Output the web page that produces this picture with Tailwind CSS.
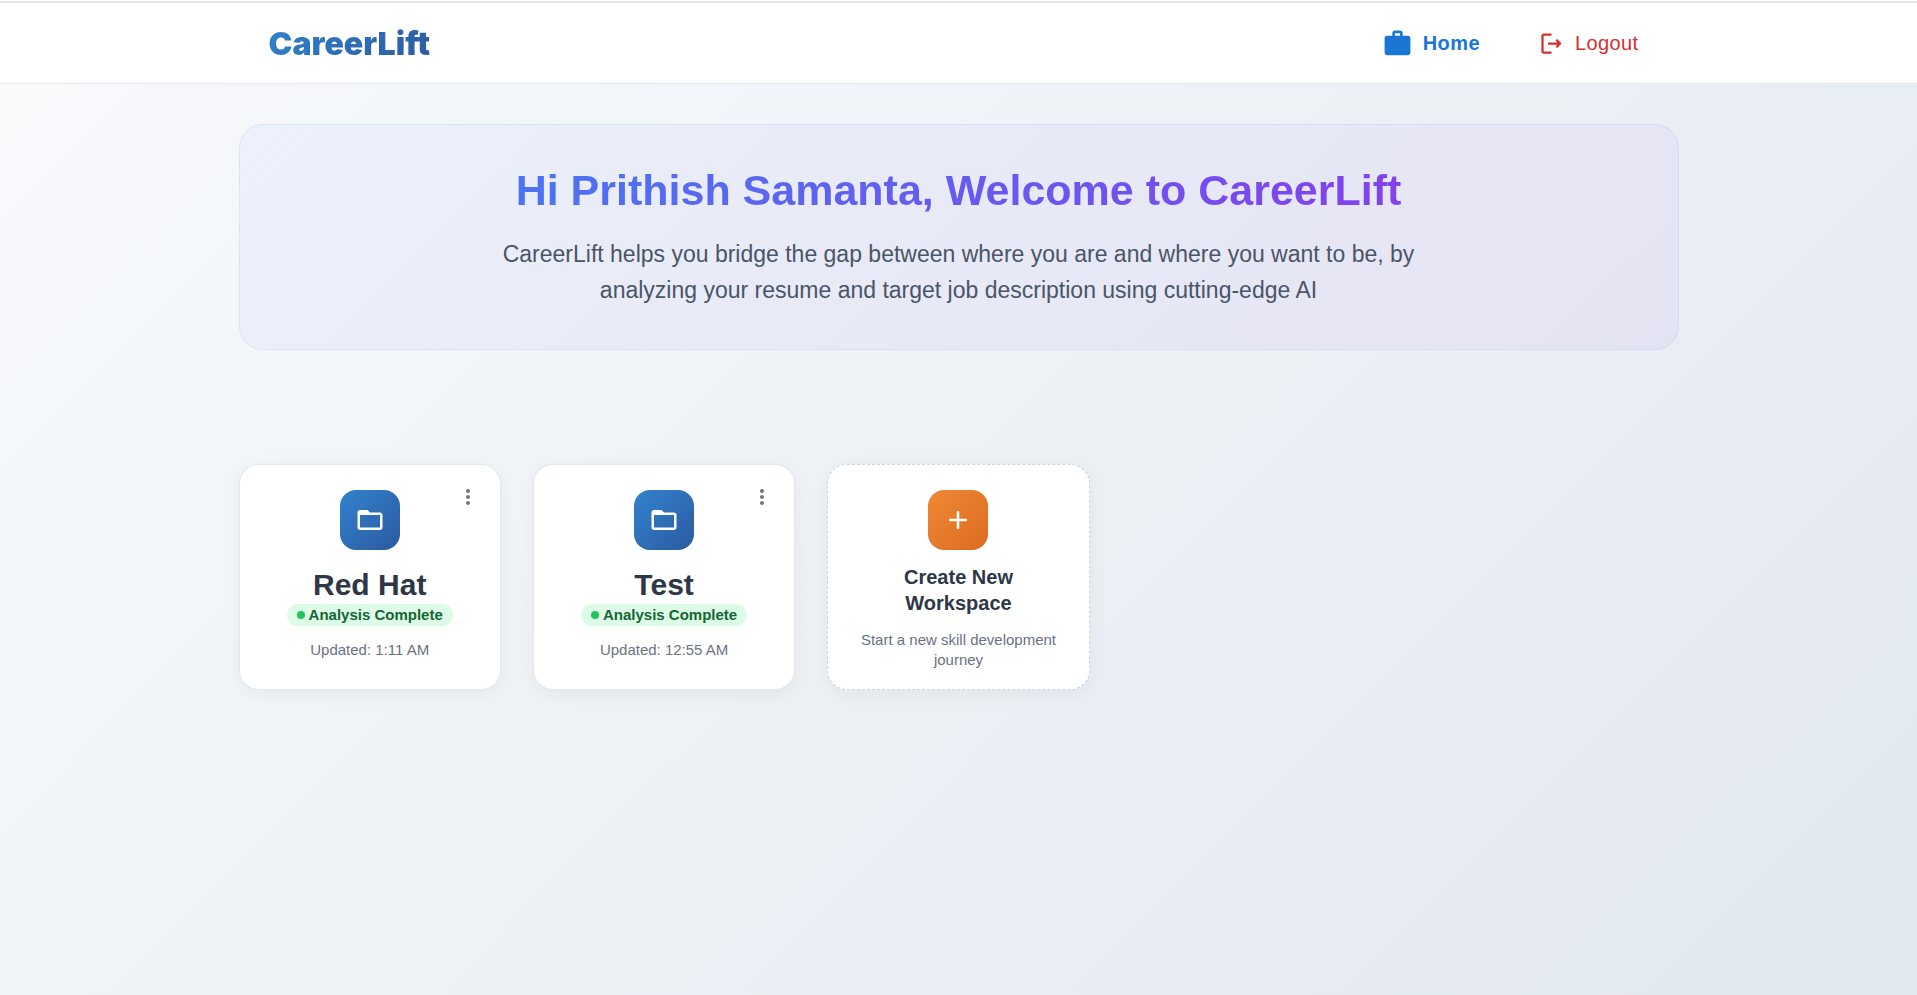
<!DOCTYPE html>
<html lang="en">
<head>
    <meta charset="UTF-8">
    <meta name="viewport" content="width=device-width, initial-scale=1.0">
    <title>CareerLift</title>
    <script src="https://cdn.jsdelivr.net/npm/@tailwindcss/browser@4"></script>
</head>
<body class="min-h-screen flex flex-col font-['Liberation_Sans',Arial,sans-serif] bg-[linear-gradient(135deg,#f8fafc_0%,#e2e8f0_100%)]">
    <!-- Top bar -->
    <header class="bg-white border-b border-[#e2e8f0]">
        <div class="mt-px h-[2px] bg-[#e4e4ea]"></div>
        <div class="max-w-[1440px] h-20 mx-auto px-[30px] flex justify-between items-center">
            <a href="#" class="pt-[2px] font-['Inter',sans-serif] font-black text-[32px] leading-10 bg-[linear-gradient(135deg,#3182ce_0%,#2c5aa0_100%)] bg-clip-text text-transparent">CareerLift</a>
            <nav class="flex items-center gap-[58px] pr-[10px] text-[20px] leading-7 tracking-[0.4px]">
                <a href="#" class="flex items-center gap-[10px] font-bold text-[#1976d2]">
                    <svg class="w-[31px] h-[31px]" viewBox="0 0 24 24" fill="currentColor"><path d="M20 6h-4V4c0-1.110-.89-2-2-2h-4c-1.110 0-2 .89-2 2v2H4c-1.110 0-2 .89-2 2v11c0 1.110.89 2 2 2h16c1.110 0 2-.89 2-2V8c0-1.110-.89-2-2-2m-6 0h-4V4h4z"/></svg>
                    Home
                </a>
                <a href="#" class="flex items-center gap-[10px] text-[#d32f2f]">
                    <svg class="w-[27px] h-[27px]" viewBox="0 0 24 24" fill="currentColor"><path d="m17 8-1.410 1.410L17.170 11H9v2h8.170l-1.580 1.580L17 16l4-4zM5 5h7V3H5c-1.100 0-2 .9-2 2v14c0 1.100.9 2 2 2h7v-2H5z"/></svg>
                    Logout
                </a>
            </nav>
        </div>
    </header>

    <main class="w-full max-w-[1440px] mx-auto pt-10">
        <!-- Welcome -->
        <section class="rounded-3xl border border-[#3b82f6]/10 bg-[linear-gradient(135deg,rgba(70,120,246,0.05)_0%,rgba(147,51,234,0.05)_100%)] px-8 pt-[39px] pb-[41px] text-center">
            <h1 class="text-[43px] leading-[52px] font-bold bg-[linear-gradient(135deg,#3b82f6_0%,#9333ea_100%)] bg-clip-text text-transparent">Hi Prithish Samanta, Welcome to CareerLift</h1>
            <p class="max-w-[960px] mx-auto mt-5 text-[23px] leading-9 text-[#4a5568]">CareerLift helps you bridge the gap between where you are and where you want to be, by analyzing your resume and target job description using cutting-edge AI</p>
        </section>

        <!-- Workspaces -->
        <section class="grid grid-cols-5 gap-8 mt-[114px] pb-10 text-center">
            <article class="relative min-h-[226px] rounded-[20px] border border-[#e2e8f0] bg-white px-6 pt-[25px] pb-4 flex flex-col items-center shadow-[0_4px_20px_rgba(0,0,0,0.05)]">
                <button type="button" aria-label="Workspace menu" class="absolute top-5 right-5 text-[#757575]">
                    <svg class="w-6 h-6" viewBox="0 0 24 24" fill="currentColor"><path d="M12 8c1.100 0 2-.9 2-2s-.9-2-2-2-2 .9-2 2 .9 2 2 2m0 2c-1.100 0-2 .9-2 2s.9 2 2 2 2-.9 2-2-.9-2-2-2m0 6c-1.100 0-2 .9-2 2s.9 2 2 2 2-.9 2-2-.9-2-2-2"/></svg>
                </button>
                <div class="size-[60px] rounded-2xl flex items-center justify-center text-white bg-[linear-gradient(135deg,#3182ce_0%,#2c5aa0_100%)]">
                    <svg class="w-[30px] h-[30px]" viewBox="0 0 24 24" fill="currentColor"><path d="M20 6h-8l-2-2H4c-1.100 0-1.990.9-1.990 2L2 18c0 1.100.9 2 2 2h16c1.100 0 2-.9 2-2V8c0-1.100-.9-2-2-2m0 12H4V8h16z"/></svg>
                </div>
                <h2 class="mt-4 text-[30px] leading-[38px] font-bold text-[#2d3748]">Red Hat</h2>
                <span class="flex items-center gap-1 h-[22px] px-[10px] rounded-full bg-[#dcfce7] text-[15px] font-bold text-[#166534]"><span class="size-2 rounded-full bg-[#22c55e]"></span>Analysis Complete</span>
                <p class="mt-[14px] text-[15px] leading-5 text-[#6b7280]">Updated: 1:11 AM</p>
            </article>

            <article class="relative min-h-[226px] rounded-[20px] border border-[#e2e8f0] bg-white px-6 pt-[25px] pb-4 flex flex-col items-center shadow-[0_4px_20px_rgba(0,0,0,0.05)]">
                <button type="button" aria-label="Workspace menu" class="absolute top-5 right-5 text-[#757575]">
                    <svg class="w-6 h-6" viewBox="0 0 24 24" fill="currentColor"><path d="M12 8c1.100 0 2-.9 2-2s-.9-2-2-2-2 .9-2 2 .9 2 2 2m0 2c-1.100 0-2 .9-2 2s.9 2 2 2 2-.9 2-2-.9-2-2-2m0 6c-1.100 0-2 .9-2 2s.9 2 2 2 2-.9 2-2-.9-2-2-2"/></svg>
                </button>
                <div class="size-[60px] rounded-2xl flex items-center justify-center text-white bg-[linear-gradient(135deg,#3182ce_0%,#2c5aa0_100%)]">
                    <svg class="w-[30px] h-[30px]" viewBox="0 0 24 24" fill="currentColor"><path d="M20 6h-8l-2-2H4c-1.100 0-1.990.9-1.990 2L2 18c0 1.100.9 2 2 2h16c1.100 0 2-.9 2-2V8c0-1.100-.9-2-2-2m0 12H4V8h16z"/></svg>
                </div>
                <h2 class="mt-4 text-[30px] leading-[38px] font-bold text-[#2d3748]">Test</h2>
                <span class="flex items-center gap-1 h-[22px] px-[10px] rounded-full bg-[#dcfce7] text-[15px] font-bold text-[#166534]"><span class="size-2 rounded-full bg-[#22c55e]"></span>Analysis Complete</span>
                <p class="mt-[14px] text-[15px] leading-5 text-[#6b7280]">Updated: 12:55 AM</p>
            </article>

            <!-- New workspace -->
            <button type="button" class="min-h-[226px] rounded-[20px] border border-dashed border-[#cbd5e0] bg-white px-6 pt-[25px] pb-4 flex flex-col items-center shadow-[0_4px_20px_rgba(0,0,0,0.05)]">
                <span class="size-[60px] rounded-2xl flex items-center justify-center text-white bg-[linear-gradient(135deg,#ed8936_0%,#dd6b20_100%)]">
                    <svg class="w-[30px] h-[30px]" viewBox="0 0 24 24" fill="currentColor"><path d="M19 13h-6v6h-2v-6H5v-2h6V5h2v6h6z"/></svg>
                </span>
                <span class="mt-[14px] text-[20px] leading-[26px] font-bold text-[#2d3748]">Create New Workspace</span>
                <span class="mt-[14px] text-[15px] leading-5 text-[#6b7280]">Start a new skill development journey</span>
            </button>
        </section>
    </main>
</body>
</html>
